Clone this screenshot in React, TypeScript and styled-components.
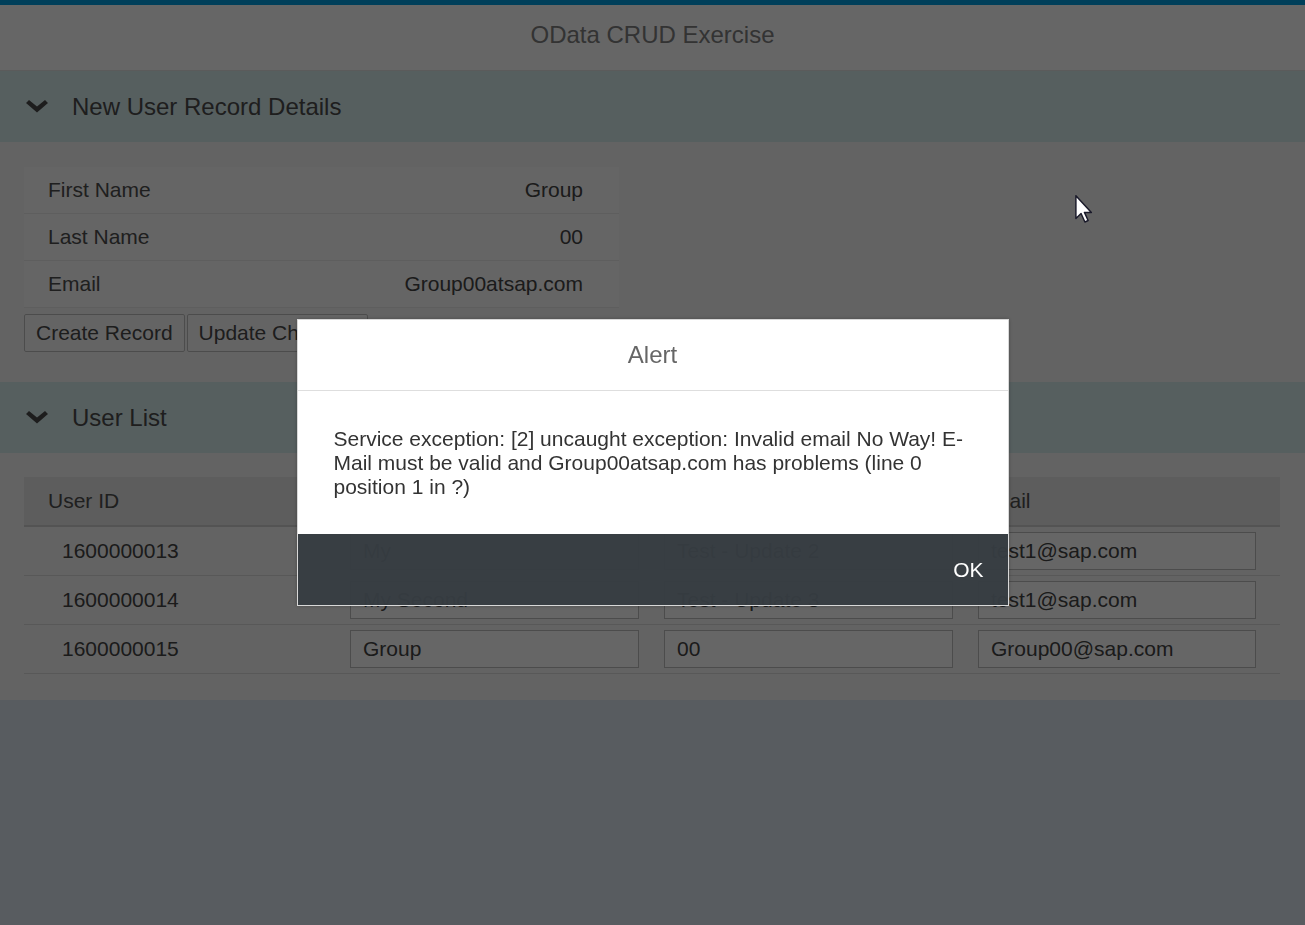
import React from 'react';
import styled, { createGlobalStyle } from 'styled-components';

const GlobalStyle = createGlobalStyle`
  html, body {
    margin: 0;
    padding: 0;
  }
  body {
    font-family: 'Liberation Sans', Arial, sans-serif;
    background: #dbe5ef;
    overflow: hidden;
  }
  * {
    box-sizing: border-box;
  }
`;

const Page = styled.div`
  display: flex;
  flex-direction: column;
  min-height: 925px;
  background: #dbe5ef;
`;

const TopStripe = styled.div`
  height: 5px;
  background: #009de0;
`;

const ShellHeader = styled.header`
  height: 66px;
  display: flex;
  align-items: center;
  justify-content: center;
  padding-bottom: 5px;
  background: #ffffff;
  border-bottom: 1px solid #e4e4e4;
`;

const ShellTitle = styled.h1`
  margin: 0;
  font-size: 24px;
  font-weight: normal;
  color: #808080;
`;

const PanelHeader = styled.div`
  height: 71px;
  display: flex;
  align-items: center;
  gap: 24px;
  padding-left: 26px;
  background: #d7edee;
`;

const PanelTitle = styled.h2`
  margin: 0;
  font-size: 24px;
  font-weight: normal;
  color: #4c4c4c;
`;

const PanelContent = styled.div<{ padding?: string }>`
  background: #f7f7f7;
  padding: ${(props) => props.padding || '24px'};
`;

const Form = styled.div`
  width: 595px;
  display: flex;
  flex-direction: column;
`;

const FormRow = styled.div`
  height: 47px;
  display: flex;
  align-items: center;
  justify-content: space-between;
  padding: 0 36px 0 24px;
  background: #fcfcfc;
  border-bottom: 1px solid #eaeaea;
  font-size: 21px;
`;

const Label = styled.span`
  color: #4e4e4e;
`;

const Value = styled.span`
  color: #444444;
`;

const ButtonBar = styled.div`
  display: flex;
  gap: 2px;
  margin-top: 6px;
`;

const Button = styled.button`
  height: 38px;
  padding: 0 11px;
  font-family: 'Liberation Sans', Arial, sans-serif;
  font-size: 21px;
  color: #4a4a4a;
  background: #fbfbfb;
  border: 1px solid #bfbfbf;
  border-radius: 2px;
`;

const Table = styled.div`
  width: 1256px;
  display: grid;
  grid-template-columns: 314px 314px 314px 314px;
`;

const HeadCell = styled.div<{ pad?: string }>`
  height: 50px;
  display: flex;
  align-items: center;
  padding-left: ${(props) => props.pad || '12px'};
  background: #e8e8e8;
  border-bottom: 2px solid #d0d0d0;
  font-size: 21px;
  color: #4e4e4e;
`;

const Cell = styled.div<{ pad?: string; padRight?: string }>`
  height: 49px;
  display: flex;
  align-items: center;
  padding-left: ${(props) => props.pad || '12px'};
  padding-right: ${(props) => props.padRight || '13px'};
  border-bottom: 1px solid #dcdcdc;
  font-size: 21px;
  color: #444444;
`;

const Input = styled.input`
  width: 100%;
  height: 38px;
  padding: 0 12px;
  font-family: 'Liberation Sans', Arial, sans-serif;
  font-size: 21px;
  color: #444444;
  background: #ffffff;
  border: 1px solid #bdbdbd;
  outline: none;
`;

const Overlay = styled.div`
  position: fixed;
  inset: 0;
  display: flex;
  align-items: center;
  justify-content: center;
  background: rgba(0, 0, 0, 0.6);
`;

const Dialog = styled.div`
  width: 712px;
  display: flex;
  flex-direction: column;
  border: 1px solid #d8d8d8;
  box-shadow: 0 0 4px rgba(0, 0, 0, 0.25);
`;

const DialogHeader = styled.div`
  height: 71px;
  display: flex;
  align-items: center;
  justify-content: center;
  background: #ffffff;
  border-bottom: 1px solid #dedede;
  font-size: 24px;
  color: #666666;
`;

const DialogBody = styled.div`
  padding: 36px 36px 35px 36px;
  background: #ffffff;
  font-size: 21px;
  line-height: 24px;
  color: #333333;
`;

const DialogFooter = styled.div`
  height: 71px;
  display: flex;
  align-items: center;
  justify-content: flex-end;
  padding-right: 24px;
  background: rgba(54, 60, 66, 0.96);
`;

const FooterButton = styled.button`
  padding: 0;
  background: transparent;
  border: none;
  font-family: 'Liberation Sans', Arial, sans-serif;
  font-size: 21px;
  color: #ffffff;
`;

const Cursor = styled.svg`
  position: fixed;
  left: 1075px;
  top: 195px;
`;

const Chevron = () => (
  <svg width="22" height="13" viewBox="0 0 22 13">
    <path d="M0 3 L3 0 L11 6.5 L19 0 L22 3 L11 12.5 Z" fill="#4a4a4a" />
  </svg>
);

const users = [
  { id: '1600000013', first: 'My', last: 'Test - Update 2', email: 'test1@sap.com' },
  { id: '1600000014', first: 'My Second', last: 'Test - Update 3', email: 'test1@sap.com' },
  { id: '1600000015', first: 'Group', last: '00', email: 'Group00@sap.com' },
];

export default function App() {
  return (
    <>
      <GlobalStyle />
      <Page>
        <TopStripe />
        <ShellHeader>
          <ShellTitle>OData CRUD Exercise</ShellTitle>
        </ShellHeader>

        <PanelHeader>
          <Chevron />
          <PanelTitle>New User Record Details</PanelTitle>
        </PanelHeader>
        <PanelContent padding="25px 24px 30px">
          <Form>
            <FormRow>
              <Label>First Name</Label>
              <Value>Group</Value>
            </FormRow>
            <FormRow>
              <Label>Last Name</Label>
              <Value>00</Value>
            </FormRow>
            <FormRow>
              <Label>Email</Label>
              <Value>Group00atsap.com</Value>
            </FormRow>
          </Form>
          <ButtonBar>
            <Button>Create Record</Button>
            <Button>Update Changes</Button>
          </ButtonBar>
        </PanelContent>

        <PanelHeader>
          <Chevron />
          <PanelTitle>User List</PanelTitle>
        </PanelHeader>
        <PanelContent padding="24px 24px 26px">
          <Table>
            <HeadCell pad="24px">User ID</HeadCell>
            <HeadCell>First Name</HeadCell>
            <HeadCell>Last Name</HeadCell>
            <HeadCell>Email</HeadCell>
            {users.map((u) => (
              <React.Fragment key={u.id}>
                <Cell pad="38px">{u.id}</Cell>
                <Cell>
                  <Input defaultValue={u.first} />
                </Cell>
                <Cell>
                  <Input defaultValue={u.last} />
                </Cell>
                <Cell padRight="24px">
                  <Input defaultValue={u.email} />
                </Cell>
              </React.Fragment>
            ))}
          </Table>
        </PanelContent>
      </Page>

      <Overlay>
        <Dialog>
          <DialogHeader>Alert</DialogHeader>
          <DialogBody>
            Service exception: [2] uncaught exception: Invalid email No Way! E-Mail must be valid and
            Group00atsap.com has problems (line 0 position 1 in ?)
          </DialogBody>
          <DialogFooter>
            <FooterButton>OK</FooterButton>
          </DialogFooter>
        </Dialog>
      </Overlay>

      <Cursor width="18" height="28" viewBox="0 0 12 19">
        <path
          d="M0.5 0.5 L0.5 16 L4 12.6 L6.6 18.3 L8.8 17.3 L6.3 11.8 L11 11.8 Z"
          fill="#ffffff"
          stroke="#1a1a2a"
          strokeWidth="1"
          strokeLinejoin="round"
        />
      </Cursor>
    </>
  );
}
